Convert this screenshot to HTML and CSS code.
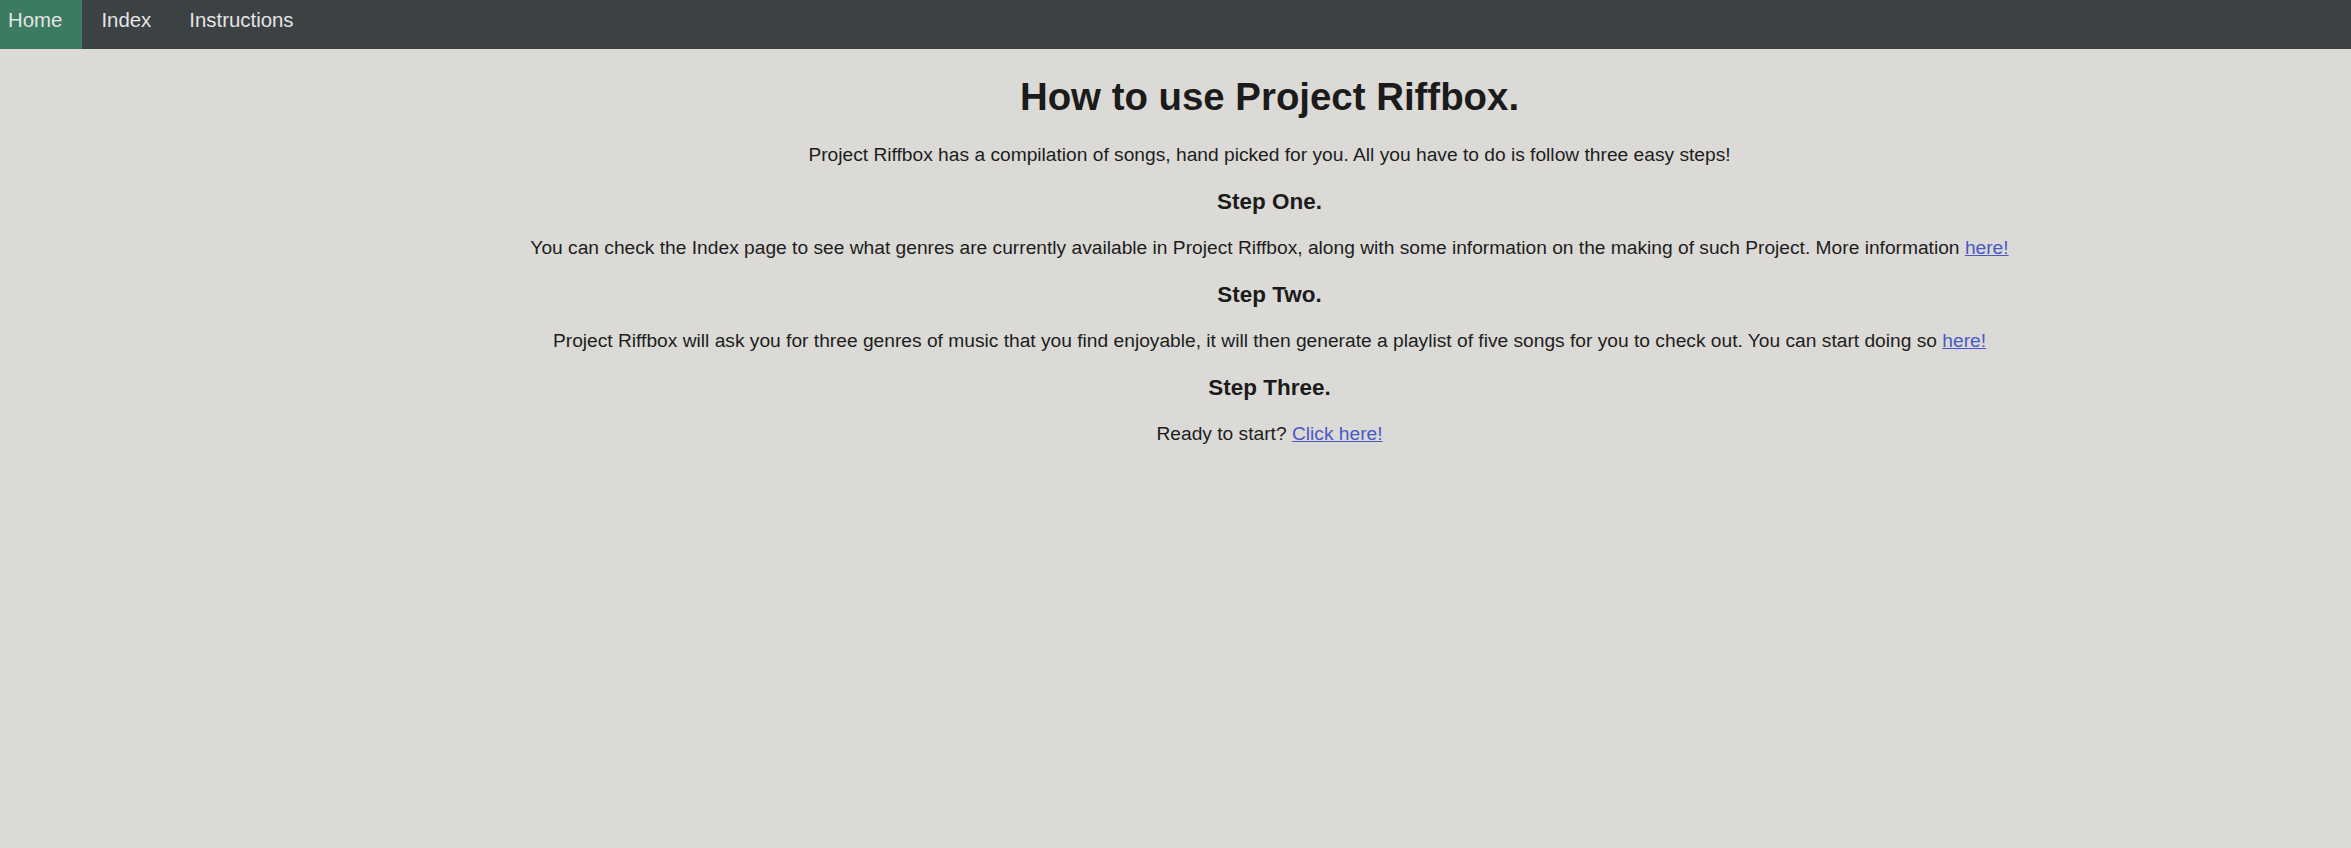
FILE: index.html
```html
<!DOCTYPE html>
<html lang="en">
<head>
<meta charset="utf-8">
<title>Project Riffbox - Instructions</title>
<link rel="stylesheet" href="styles.css">
</head>
<body>
<nav class="topnav">
  <a class="nav-link nav-home" href="#">Home</a>
  <a class="nav-link" href="#">Index</a>
  <a class="nav-link" href="#">Instructions</a>
</nav>
<main class="content">
  <h1 class="title">How to use Project Riffbox.</h1>
  <p class="text">Project Riffbox has a compilation of songs, hand picked for you. All you have to do is follow three easy steps!</p>
  <h3 class="step">Step One.</h3>
  <p class="text">You can check the Index page to see what genres are currently available in Project Riffbox, along with some information on the making of such Project. More information <a class="link" href="#">here!</a></p>
  <h3 class="step">Step Two.</h3>
  <p class="text">Project Riffbox will ask you for three genres of music that you find enjoyable, it will then generate a playlist of five songs for you to check out. You can start doing so <a class="link" href="#">here!</a></p>
  <h3 class="step">Step Three.</h3>
  <p class="text">Ready to start? <a class="link" href="#">Click here!</a></p>
</main>
</body>
</html>
```
FILE: styles.css
```css
html, body {
  margin: 0;
  padding: 0;
}
body {
  background: #dbdad6;
  font-family: "Liberation Sans", Arial, sans-serif;
  font-size: 19.2px;
  color: #1d1d1d;
}
.topnav {
  display: flex;
  height: 49px;
  background: #3c4144;
}
.nav-link {
  display: block;
  box-sizing: border-box;
  height: 49px;
  padding: 8.5px 19px 0 19px;
  font-size: 20.4px;
  line-height: 23.5px;
  color: #e4e4e4;
  text-decoration: none;
}
.nav-home {
  background: #3a7b61;
  padding-left: 8px;
  padding-right: 20px;
}
.content {
  margin-left: 188px;
  text-align: center;
}
.title {
  font-size: 38.4px;
  margin: 25.7px 0;
  color: #1b1b1b;
}
.step {
  font-size: 22.46px;
  margin: 22.46px 0;
  color: #1b1b1b;
}
.text {
  margin: 19.2px 0;
}
.link {
  color: #4a59c6;
}
```
